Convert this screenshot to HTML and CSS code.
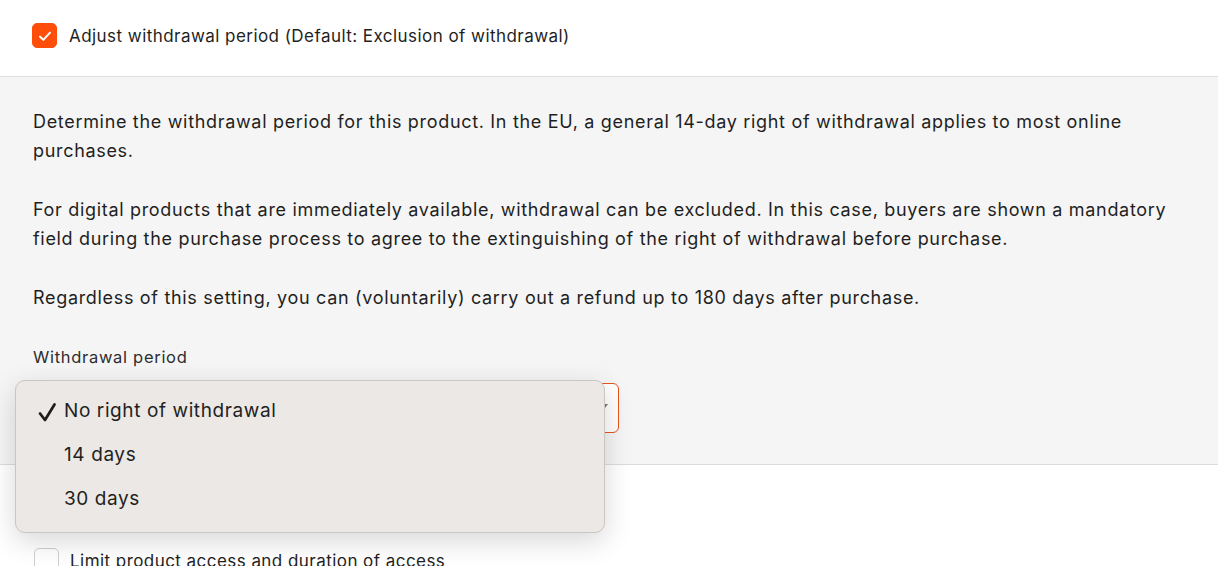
FILE: index.html
```html
<!DOCTYPE html>
<html lang="en">
<head>
<meta charset="utf-8">
<title>Withdrawal period</title>
<link rel="stylesheet" href="styles.css">
</head>
<body>
  <div class="top">
    <label class="check-row">
      <span class="box checked">
        <svg viewBox="0 0 24 24" width="20" height="20"><path d="M6 12.8l4 3.8 8-8.6" fill="none" stroke="#fff" stroke-width="2.4" stroke-linecap="round" stroke-linejoin="round"/></svg>
      </span>
      <span class="check-label">Adjust withdrawal period (Default: Exclusion of withdrawal)</span>
    </label>
  </div>
  <div class="panel">
    <p>Determine the withdrawal period for this product. In the EU, a general 14-day right of withdrawal applies to most online purchases.</p>
    <p>For digital products that are immediately available, withdrawal can be excluded. In this case, buyers are shown a mandatory field during the purchase process to agree to the extinguishing of the right of withdrawal before purchase.</p>
    <p>Regardless of this setting, you can (voluntarily) carry out a refund up to 180 days after purchase.</p>
    <div class="field-label">Withdrawal period</div>
    <div class="select-wrap">
      <div class="select">
        <span class="select-value">No right of withdrawal</span>
        <span class="caret"></span>
      </div>
      <div class="menu">
        <div class="opt"><span class="tick"><svg viewBox="0 0 20 22" width="20" height="22"><path d="M3 12.5l5 6.5L17.5 3.5" fill="none" stroke="#1c1c1c" stroke-width="2.7" stroke-linecap="round" stroke-linejoin="round"/></svg></span>No right of withdrawal</div>
        <div class="opt"><span class="tick"></span>14 days</div>
        <div class="opt"><span class="tick"></span>30 days</div>
      </div>
    </div>
  </div>
  <div class="bottom">
    <label class="check-row">
      <span class="box"></span>
      <span class="check-label">Limit product access and duration of access</span>
    </label>
  </div>
</body>
</html>
```

FILE: styles.css
```css
* { box-sizing: border-box; }
html, body { margin: 0; padding: 0; }
body {
  font-family: Inter, "Noto Sans", sans-serif;
  color: #1f1f1f;
  background: #fff;
  width: 1218px;
  height: 566px;
  overflow: hidden;
}
.top {
  height: 77px;
  border-bottom: 1px solid #dcdcdc;
  display: flex;
  align-items: center;
  padding: 0 32px;
  padding-bottom: 5px;
}
.check-row {
  display: flex;
  align-items: center;
  gap: 12px;
}
.box {
  width: 25px;
  height: 25px;
  border-radius: 5px;
  border: 1.5px solid #cfcfcf;
  background: #fff;
  display: flex;
  align-items: center;
  justify-content: center;
}
.box.checked {
  background: #ff4d0a;
  border-color: #ff4d0a;
}
.check-label {
  font-size: 17px;
  letter-spacing: 0.45px;
  color: #1f1f1f;
}
.panel {
  background: #f5f5f5;
  border-bottom: 1px solid #dcdcdc;
  padding: 30px 33px 31px 33px;
}
.panel p {
  margin: 0 0 30px 0;
  font-size: 18px;
  letter-spacing: 0.68px;
  line-height: 29px;
  color: #1f1f1f;
}
.panel p:nth-of-type(3) { margin-bottom: 34px; }
.field-label {
  font-size: 16.5px;
  letter-spacing: 0.7px;
  line-height: 22px;
  color: #2e2e2e;
  margin-bottom: 15px;
}
.select-wrap {
  position: relative;
  width: 586px;
}
.select {
  height: 50px;
  border: 1px solid #e8541a;
  border-radius: 6px;
  background: #fff;
  display: flex;
  align-items: center;
  justify-content: space-between;
  padding: 0 10px 0 14px;
  font-size: 17px;
}
.caret {
  width: 0;
  height: 0;
  margin-top: -4px;
  border-left: 3px solid transparent;
  border-right: 3px solid transparent;
  border-top: 4px solid #777;
}
.menu {
  position: absolute;
  left: -18px;
  top: -3px;
  width: 590px;
  height: 153px;
  background: #ebe8e5;
  border: 1px solid #c9c6c3;
  border-radius: 10px;
  box-shadow: 0 8px 28px rgba(0, 0, 0, 0.16);
  padding: 7px 0;
}
.opt {
  height: 44px;
  display: flex;
  align-items: center;
  font-size: 19px;
  letter-spacing: 0.6px;
  color: #1f1f1f;
  padding-left: 21px;
}
.tick {
  width: 27px;
  display: flex;
  align-items: center;
  margin-top: 4px;
}
.bottom {
  padding: 83px 33px 0 34px;
}
.bottom .check-row { gap: 11px; }
```
